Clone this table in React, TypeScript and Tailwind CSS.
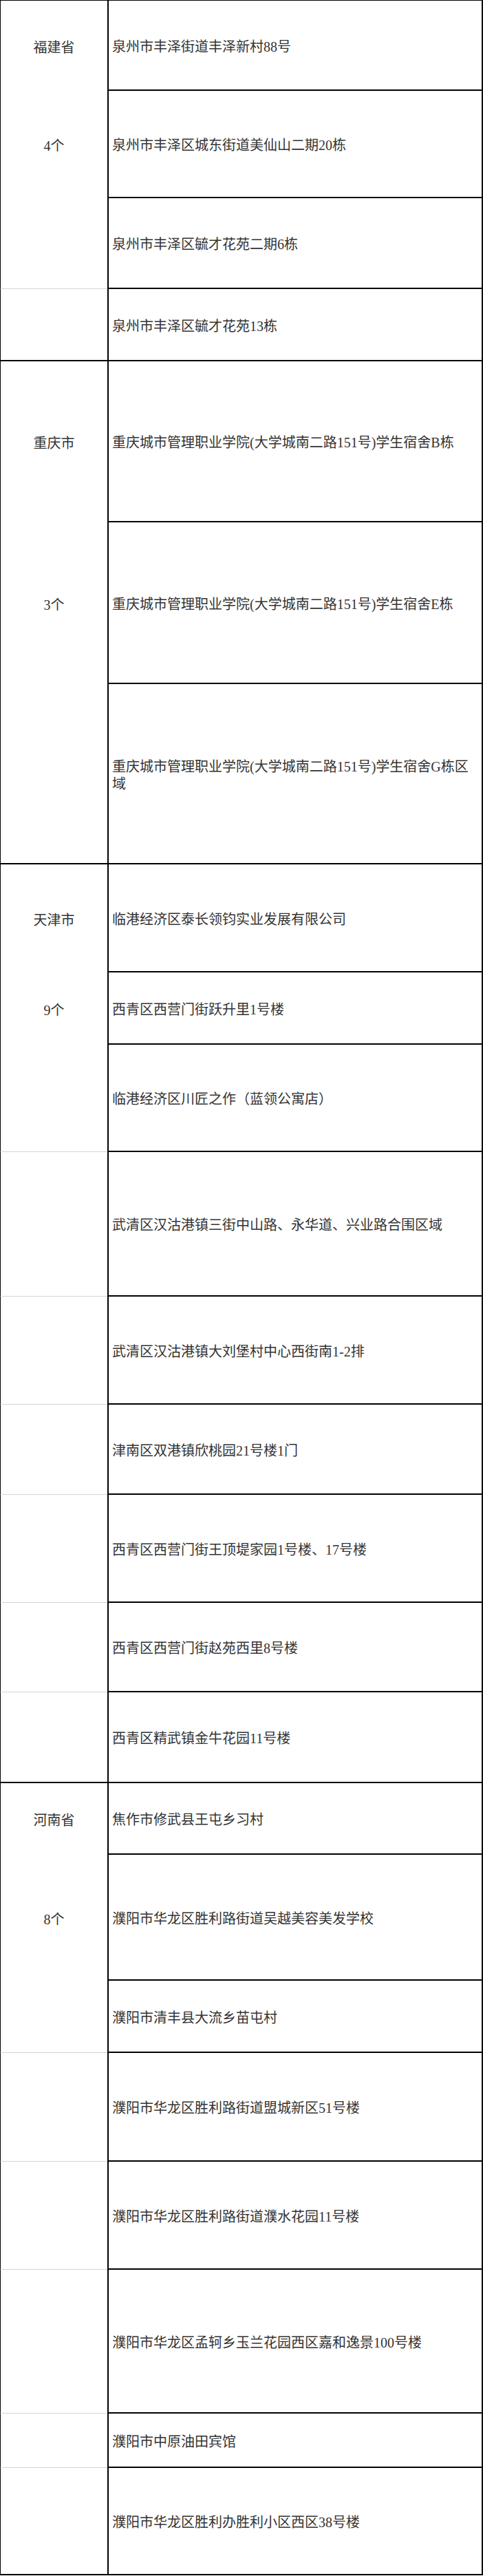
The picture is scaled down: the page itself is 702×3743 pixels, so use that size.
import React from "react";

type Row = {
  addr: string;
  h: string;
  left?: string;
  lb: "none" | "gray" | "black";
};

const rows: Row[] = [
  { addr: "泉州市丰泽街道丰泽新村88号", h: "h-[131px]", left: "福建省", lb: "none" },
  { addr: "泉州市丰泽区城东街道美仙山二期20栋", h: "h-[156px]", left: "4个", lb: "none" },
  { addr: "泉州市丰泽区毓才花苑二期6栋", h: "h-[132px]", lb: "gray" },
  { addr: "泉州市丰泽区毓才花苑13栋", h: "h-[105px]", lb: "black" },
  { addr: "重庆城市管理职业学院(大学城南二路151号)学生宿舍B栋", h: "h-[234px]", left: "重庆市", lb: "none" },
  { addr: "重庆城市管理职业学院(大学城南二路151号)学生宿舍E栋", h: "h-[235px]", left: "3个", lb: "none" },
  { addr: "重庆城市管理职业学院(大学城南二路151号)学生宿舍G栋区域", h: "h-[262px]", lb: "black" },
  { addr: "临港经济区泰长领钧实业发展有限公司", h: "h-[157px]", left: "天津市", lb: "none" },
  { addr: "西青区西营门街跃升里1号楼", h: "h-[105px]", left: "9个", lb: "none" },
  { addr: "临港经济区川匠之作（蓝领公寓店）", h: "h-[156px]", lb: "gray" },
  { addr: "武清区汉沽港镇三街中山路、永华道、兴业路合围区域", h: "h-[210px]", lb: "gray" },
  { addr: "武清区汉沽港镇大刘堡村中心西街南1-2排", h: "h-[157px]", lb: "gray" },
  { addr: "津南区双港镇欣桃园21号楼1门", h: "h-[131px]", lb: "gray" },
  { addr: "西青区西营门街王顶堤家园1号楼、17号楼", h: "h-[157px]", lb: "gray" },
  { addr: "西青区西营门街赵苑西里8号楼", h: "h-[130px]", lb: "gray" },
  { addr: "西青区精武镇金牛花园11号楼", h: "h-[132px]", lb: "black" },
  { addr: "焦作市修武县王屯乡习村", h: "h-[104px]", left: "河南省", lb: "none" },
  { addr: "濮阳市华龙区胜利路街道吴越美容美发学校", h: "h-[183px]", left: "8个", lb: "none" },
  { addr: "濮阳市清丰县大流乡苗屯村", h: "h-[105px]", lb: "gray" },
  { addr: "濮阳市华龙区胜利路街道盟城新区51号楼", h: "h-[158px]", lb: "gray" },
  { addr: "濮阳市华龙区胜利路街道濮水花园11号楼", h: "h-[157px]", lb: "gray" },
  { addr: "濮阳市华龙区孟轲乡玉兰花园西区嘉和逸景100号楼", h: "h-[209px]", lb: "gray" },
  { addr: "濮阳市中原油田宾馆", h: "h-[79px]", lb: "gray" },
  { addr: "濮阳市华龙区胜利办胜利小区西区38号楼", h: "h-[156px]", lb: "black" },
];

const leftBorder: Record<Row["lb"], string> = {
  none: "",
  gray: "border-b border-b-[#d4d4d4]",
  black: "border-b-2 border-b-black",
};

export default function App() {
  return (
    <div className="w-[702px] bg-white text-[20px] leading-[25px] text-[#333] [font-family:'Liberation_Serif','Noto_Sans_CJK_SC',serif]">
      <div className="border-t border-black">
        {rows.map((r, i) => (
          <div key={i} className={`flex ${r.h}`}>
            <div
              className={`w-[156px] shrink-0 border-l border-l-black flex items-center justify-center pt-[5px] ${leftBorder[r.lb]}`}
            >
              {r.left ?? ""}
            </div>
            <div className="flex-1 min-w-0 border-l-2 border-r-2 border-b-2 border-black flex items-center pl-[5px] pr-[5px] pt-[5px]">
              <p>{r.addr}</p>
            </div>
          </div>
        ))}
      </div>
    </div>
  );
}
